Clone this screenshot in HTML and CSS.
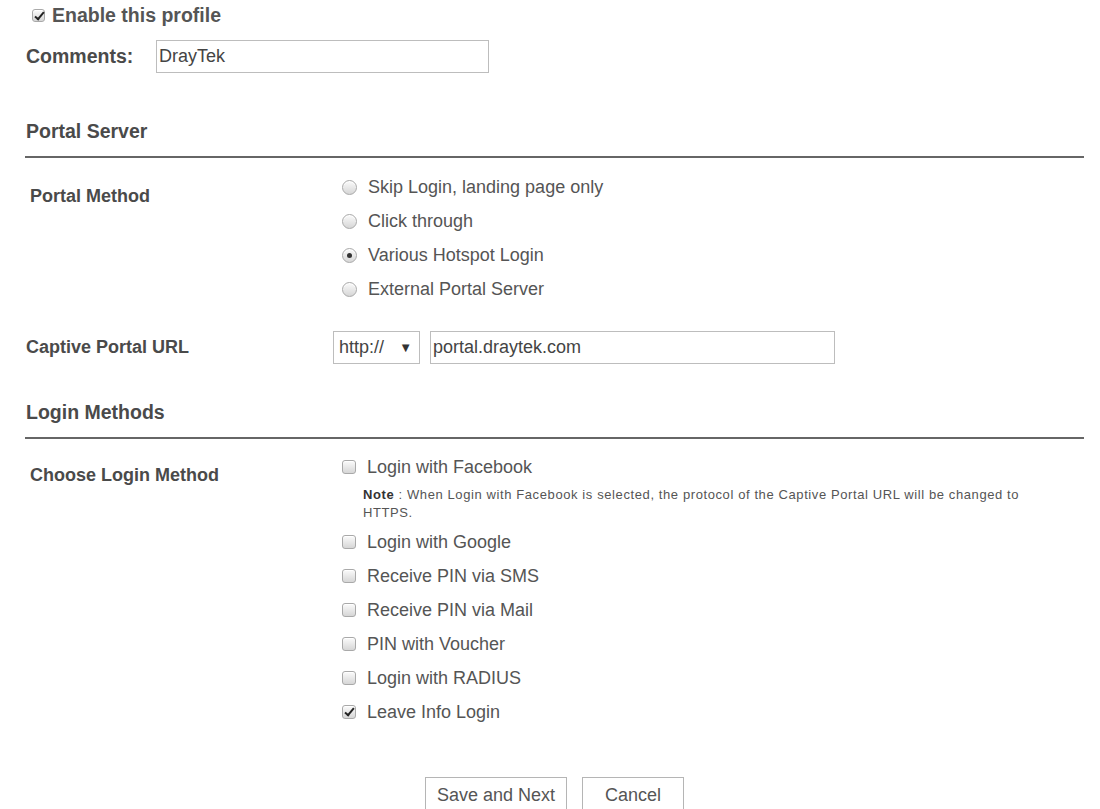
FILE: index.html
```html
<!DOCTYPE html>
<html lang="en">
<head>
	<meta charset="UTF-8">
	<title>Hotspot Web Portal - Profile</title>
	<link rel="stylesheet" href="styles.css">
</head>
<body>
	<div id="container">
		<label class="enable"><input type="checkbox" class="cb" checked>Enable this profile</label>

		<div class="comments">
			<span class="comments-label">Comments:</span>
			<input type="text" class="text comments-input" value="DrayTek">
		</div>

		<!-- Portal Server -->
		<h3 class="section">Portal Server</h3>
		<div class="row method-row">
			<div class="row-label indent">Portal Method</div>
			<div class="row-value">
				<label class="opt"><input type="radio" class="rb" name="method">Skip Login, landing page only</label>
				<label class="opt"><input type="radio" class="rb" name="method">Click through</label>
				<label class="opt"><input type="radio" class="rb" name="method" checked>Various Hotspot Login</label>
				<label class="opt"><input type="radio" class="rb" name="method">External Portal Server</label>
			</div>
		</div>
		<div class="row url-row">
			<div class="row-label">Captive Portal URL</div>
			<div class="row-value url">
				<div class="select">http://<span class="arrow">&#9660;</span></div>
				<input type="text" class="text url-input" value="portal.draytek.com">
			</div>
		</div>

		<!-- Login Methods -->
		<h3 class="section">Login Methods</h3>
		<div class="row login-row">
			<div class="row-label indent">Choose Login Method</div>
			<div class="row-value">
				<label class="opt"><input type="checkbox" class="cb">Login with Facebook</label>
				<p class="note"><b>Note</b> : When Login with Facebook is selected, the protocol of the Captive Portal URL will be changed to<br>HTTPS.</p>
				<label class="opt"><input type="checkbox" class="cb">Login with Google</label>
				<label class="opt"><input type="checkbox" class="cb">Receive PIN via SMS</label>
				<label class="opt"><input type="checkbox" class="cb">Receive PIN via Mail</label>
				<label class="opt"><input type="checkbox" class="cb">PIN with Voucher</label>
				<label class="opt"><input type="checkbox" class="cb">Login with RADIUS</label>
				<label class="opt"><input type="checkbox" class="cb" checked>Leave Info Login</label>
			</div>
		</div>

		<div class="buttons">
			<button class="btn save">Save and Next</button>
			<button class="btn">Cancel</button>
		</div>
	</div>
</body>
</html>
```

FILE: styles.css
```css
body {
	margin: 0;
	font-family: 'Liberation Sans', Arial, sans-serif;
	color: #555;
	background: #fff;
}
#container {
	margin: 0 16px 0 25px;
}

/*custom checkbox / radio*/
.cb, .rb {
	-webkit-appearance: none;
	appearance: none;
	position: relative;
	flex: none;
	box-sizing: border-box;
	margin: 0;
	width: 14px;
	height: 14px;
	border: 1px solid #a9a9a9;
	background: linear-gradient(#fbfbfb, #d6d6d6);
	box-shadow: inset 0 1px 0 #fff;
}
.cb {
	border-radius: 3px;
}
.rb {
	width: 15px;
	height: 15px;
	border-radius: 50%;
}
.cb:checked::after {
	content: '';
	position: absolute;
	left: 4px;
	top: 0;
	width: 3px;
	height: 8px;
	border: solid #222;
	border-width: 0 2.5px 2.5px 0;
	transform: rotate(40deg);
}
.rb:checked::after {
	content: '';
	position: absolute;
	left: 4px;
	top: 4px;
	width: 5px;
	height: 5px;
	border-radius: 50%;
	background: #333;
}

/*top*/
.enable {
	display: flex;
	align-items: center;
	height: 30px;
	padding-left: 7px;
	font-size: 19.5px;
	font-weight: bold;
}
.enable .cb {
	margin-right: 7px;
	width: 13px;
	height: 13px;
}
.comments {
	display: flex;
	align-items: center;
	margin-top: 10px;
	height: 33px;
}
.comments-label {
	width: 130px;
	padding-left: 1px;
	font-size: 19.5px;
	font-weight: bold;
	color: #4a4a4a;
}
.text {
	box-sizing: border-box;
	height: 33px;
	padding: 0 0 0 2px;
	border: 1px solid #bdbdbd;
	font-family: inherit;
	font-size: 18px;
	color: #444;
	outline: none;
}
.comments-input {
	width: 333px;
}

/*section titles*/
.section {
	margin: 47px 0 0;
	padding: 0 0 14px 1px;
	border-bottom: 2px solid #666;
	font-size: 19.5px;
	line-height: 22px;
	color: #4a4a4a;
}

/*rows*/
.row {
	display: flex;
}
.row-label {
	width: 307px;
	padding-left: 1px;
	font-size: 18px;
	font-weight: bold;
	color: #4a4a4a;
}
.row-label.indent {
	padding-left: 5px;
	width: 303px;
}
.row-value {
	flex: 1;
}
.opt {
	display: flex;
	align-items: center;
	height: 34px;
	padding-left: 9px;
	font-size: 18px;
}
.opt .rb {
	margin-right: 11px;
}
.opt .cb {
	margin-right: 11px;
}

.method-row {
	margin-top: 12px;
}
.method-row .row-label {
	padding-top: 16px;
}
.url-row {
	margin-top: 25px;
	align-items: center;
}
.url {
	display: flex;
	gap: 10px;
}
.select {
	box-sizing: border-box;
	display: flex;
	align-items: center;
	justify-content: space-between;
	width: 87px;
	height: 33px;
	padding: 0 7px 0 5px;
	border: 1px solid #bdbdbd;
	font-size: 18px;
	color: #444;
}
.arrow {
	font-size: 13px;
	color: #333;
}
.url-input {
	width: 405px;
}

.url-row + .section {
	margin-top: 37px;
}
.login-row {
	margin-top: 11px;
}
.login-row .row-label {
	padding-top: 15px;
}
.note {
	margin: 2px 0 3px 30px;
	padding-right: 40px;
	font-size: 13px;
	letter-spacing: 0.6px;
	line-height: 18px;
	color: #555;
}
.note b {
	color: #333;
}

/*buttons*/
.buttons {
	display: flex;
	justify-content: center;
	gap: 15px;
	margin-top: 48px;
}
.btn {
	height: 36px;
	min-width: 102px;
	padding: 0 11px;
	border: 1px solid #b5b5b5;
	background: #fff;
	font-family: inherit;
	font-size: 18px;
	color: #555;
}
```
